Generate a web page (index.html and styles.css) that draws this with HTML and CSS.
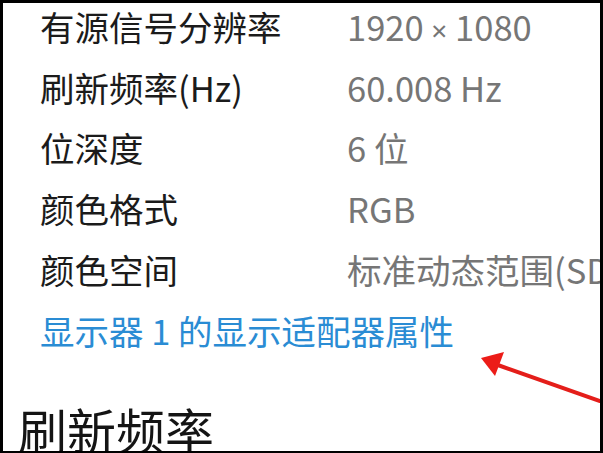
FILE: index.html
```html
<!DOCTYPE html>
<html lang="zh-CN">
<head>
<meta charset="utf-8">
<title>显示器信息</title>
<link rel="stylesheet" href="styles.css">
</head>
<body>
<div class="frame">
  <div class="info">
    <div class="row"><span class="label">有源信号分辨率</span><span class="value">1920 <span class="times">×</span> 1080</span></div>
    <div class="row"><span class="label">刷新频率(Hz)</span><span class="value">60.008 Hz</span></div>
    <div class="row"><span class="label">位深度</span><span class="value">6 位</span></div>
    <div class="row"><span class="label">颜色格式</span><span class="value">RGB</span></div>
    <div class="row"><span class="label">颜色空间</span><span class="value">标准动态范围(SDR)</span></div>
  </div>
  <a class="link" href="#">显示器 1 的显示适配器属性</a>
  <h2 class="heading">刷新频率</h2>
  <svg class="arrow" width="603" height="453" viewBox="0 0 603 453" aria-hidden="true">
    <line x1="495" y1="364" x2="600" y2="401" stroke="#e41e1a" stroke-width="4" stroke-linecap="round"/>
    <polygon points="481,358 504,352 495,376" fill="#ec1c18"/>
  </svg>
</div>
</body>
</html>
```

FILE: styles.css
```css
* { box-sizing: border-box; }
html, body { margin: 0; padding: 0; background: #000; }
body {
  width: 603px;
  height: 453px;
  overflow: hidden;
  font-family: "Noto Sans CJK SC", "Noto Sans", sans-serif;
}
.frame {
  position: relative;
  width: 603px;
  height: 453px;
  border-style: solid;
  border-color: #000;
  border-width: 3px 3px 2px 3px;
  background: #fff;
  overflow: hidden;
}
.info {
  margin-top: -7px;
  padding-left: 37px;
}
.row {
  display: grid;
  grid-template-columns: 307px 1fr;
  height: 60.7px;
  line-height: 60.7px;
  font-size: 34.5px;
  white-space: nowrap;
}
.label { color: #1b1b1b; }
.value { color: #767676; }
.times {
  font-family: "Noto Sans", sans-serif;
  font-size: 28px;
}
.link {
  display: block;
  margin-left: 37px;
  height: 62px;
  line-height: 62px;
  font-size: 34.5px;
  color: #2a8cd4;
  text-decoration: none;
  white-space: nowrap;
}
.heading {
  margin: 0;
  margin-left: 15px;
  margin-top: 38px;
  font-size: 49px;
  font-weight: 400;
  line-height: 60px;
  color: #141414;
  white-space: nowrap;
}
.arrow {
  position: absolute;
  left: -3px;
  top: -3px;
  pointer-events: none;
}
```
